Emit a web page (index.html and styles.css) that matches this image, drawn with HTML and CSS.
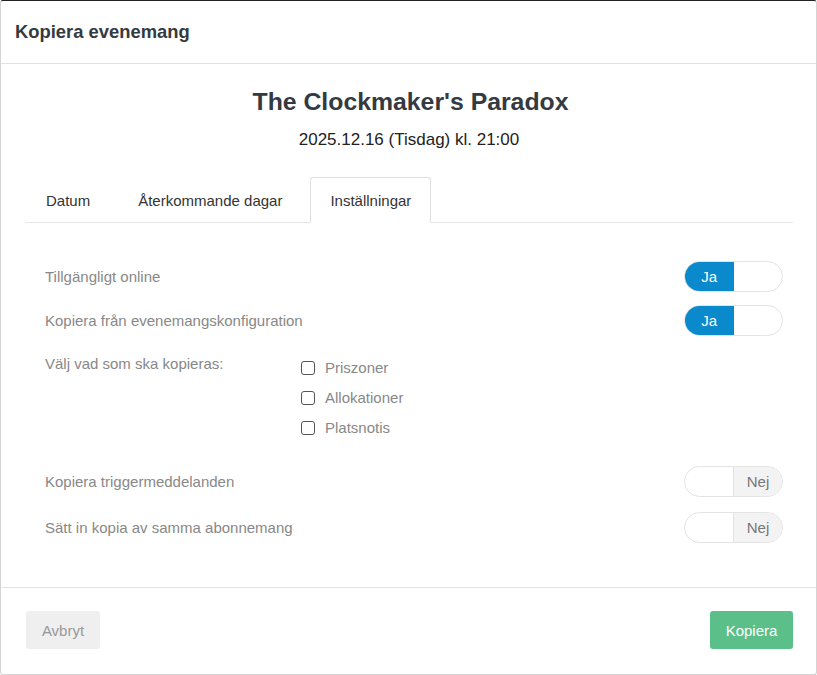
FILE: index.html
```html
<!DOCTYPE html>
<html lang="sv">
<head>
<meta charset="utf-8">
<title>Kopiera evenemang</title>
<link rel="stylesheet" href="styles.css">
</head>
<body>
<div class="modal">
  <div class="modal-header">
    <h1 class="modal-title">Kopiera evenemang</h1>
  </div>
  <div class="modal-body">
    <h2 class="event-title">The Clockmaker's Paradox</h2>
    <p class="event-date">2025.12.16 (Tisdag) kl. 21:00</p>
    <ul class="tabs">
      <li class="tab">Datum</li>
      <li class="tab">Återkommande dagar</li>
      <li class="tab active">Inställningar</li>
    </ul>
    <div class="settings">
      <div class="row">
        <span class="label">Tillgängligt online</span>
        <div class="toggle on"><span class="seg seg-yes">Ja</span><span class="seg seg-empty"></span></div>
      </div>
      <div class="row">
        <span class="label">Kopiera från evenemangskonfiguration</span>
        <div class="toggle on"><span class="seg seg-yes">Ja</span><span class="seg seg-empty"></span></div>
      </div>
      <div class="row row-checks">
        <span class="label label-fixed">Välj vad som ska kopieras:</span>
        <div class="checks">
          <label class="check"><span class="box"></span>Priszoner</label>
          <label class="check"><span class="box"></span>Allokationer</label>
          <label class="check"><span class="box"></span>Platsnotis</label>
        </div>
      </div>
      <div class="row">
        <span class="label">Kopiera triggermeddelanden</span>
        <div class="toggle off"><span class="seg seg-empty"></span><span class="seg seg-no">Nej</span></div>
      </div>
      <div class="row">
        <span class="label">Sätt in kopia av samma abonnemang</span>
        <div class="toggle off"><span class="seg seg-empty"></span><span class="seg seg-no">Nej</span></div>
      </div>
    </div>
  </div>
  <div class="modal-footer">
    <button class="btn btn-cancel">Avbryt</button>
    <button class="btn btn-primary">Kopiera</button>
  </div>
</div>
</body>
</html>
```

FILE: styles.css
```css
* { box-sizing: border-box; }
html, body { margin: 0; padding: 0; background: #fff; }
body {
  font-family: "Liberation Sans", Arial, sans-serif;
  color: #333;
}
.modal {
  width: 817px;
  height: 675px;
  border: 1px solid #d4d4d4;
  border-top: 1px solid #222;
  border-radius: 3px;
  display: flex;
  flex-direction: column;
  background: #fff;
}
.modal-header {
  height: 63px;
  border-bottom: 1px solid #e2e2e2;
  padding: 0 14px;
  display: flex;
  align-items: center;
}
.modal-title {
  margin: 0;
  font-size: 18.4px;
  font-weight: bold;
  color: #343a40;
}
.modal-body {
  flex: 1;
  padding: 23px 23px 0 24px;
}
.event-title {
  margin: 0;
  text-align: center;
  font-size: 24.8px;
  font-weight: bold;
  color: #343a40;
  line-height: 30px;
  padding-left: 3px;
}
.event-date {
  margin: 13px 0 0;
  text-align: center;
  font-size: 17px;
  color: #222;
  line-height: 20px;
}
.tabs {
  list-style: none;
  margin: 27px 0 0;
  padding: 0 0 0 1px;
  display: flex;
  border-bottom: 1px solid #e6e6e6;
  height: 46px;
}
.tab {
  padding: 0 19px;
  margin-right: 8px;
  font-size: 15px;
  color: #333;
  display: flex;
  align-items: center;
  border: 1px solid transparent;
  border-radius: 3px 3px 0 0;
  margin-bottom: -1px;
  height: 46px;
}
.tab.active {
  border-color: #e0e0e0;
  border-bottom-color: #fff;
  background: #fff;
}
.settings {
  padding: 38px 10px 0 20px;
}
.row {
  display: flex;
  justify-content: space-between;
  align-items: center;
  height: 30px;
  margin-bottom: 14px;
}
.label {
  font-size: 15px;
  color: #888;
}
.row-checks {
  height: auto;
  align-items: flex-start;
  justify-content: flex-start;
  margin-top: 20px;
  margin-bottom: 29px;
}
.label-fixed {
  width: 256px;
  line-height: 18px;
}
.checks {
  display: flex;
  flex-direction: column;
  gap: 12px;
  padding-top: 4px;
}
.check {
  display: flex;
  align-items: center;
  font-size: 15px;
  color: #888;
  line-height: 18px;
}
.box {
  width: 14px;
  height: 14px;
  border: 1.5px solid #555;
  border-radius: 3px;
  margin-right: 10px;
  background: #fff;
}
.row:last-child {
  margin-top: 16px;
}
.toggle {
  width: 99px;
  height: 31px;
  border: 1px solid #e3e3e3;
  border-radius: 16px;
  display: flex;
  overflow: hidden;
}
.seg {
  flex: 1;
  display: flex;
  align-items: center;
  justify-content: center;
  font-size: 15px;
}
.seg-yes {
  background: #0a89cd;
  color: #fff;
}
.seg-no {
  background: #f3f3f3;
  color: #777;
  border-left: 1px solid #e3e3e3;
}
.modal-footer {
  height: 87px;
  border-top: 1px solid #e2e2e2;
  display: flex;
  justify-content: space-between;
  align-items: flex-start;
  padding: 23px 23px 0 25px;
}
.btn {
  height: 38px;
  border: none;
  border-radius: 3px;
  font-family: "Liberation Sans", Arial, sans-serif;
  font-size: 15px;
  padding: 0 15px;
  cursor: pointer;
}
.btn-cancel {
  background: #efefef;
  color: #999;
  width: 74px;
}
.btn-primary {
  background: #5abf88;
  color: #fff;
  width: 83px;
}
```
